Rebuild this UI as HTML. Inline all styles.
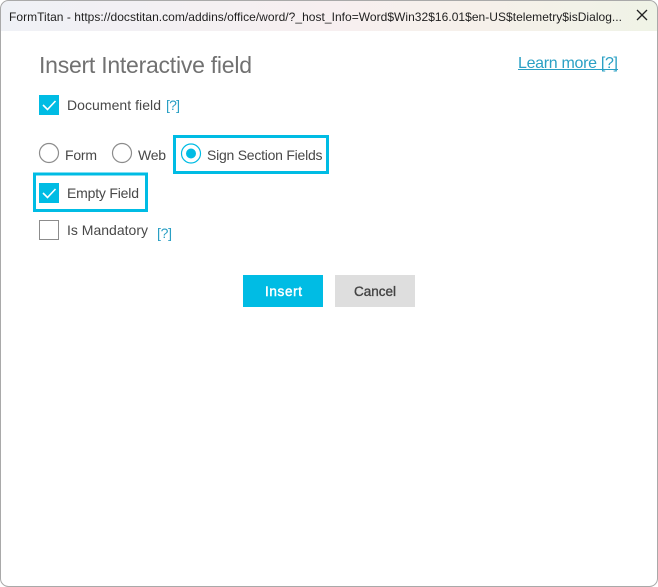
<!DOCTYPE html>
<html><head><meta charset="utf-8"><style>
html,body{margin:0;padding:0;width:658px;height:587px;overflow:hidden;background:#fff}
svg{display:block;position:absolute;left:0;top:0}
text{font-family:"Liberation Sans",sans-serif}
</style></head><body>
<svg width="658" height="587" viewBox="0 0 658 587" xmlns="http://www.w3.org/2000/svg">
<defs><linearGradient id="g" x1="0" x2="1" y1="0" y2="0">
<stop offset="0" stop-color="#eff1f6"/><stop offset=".5" stop-color="#f7eff0"/><stop offset=".72" stop-color="#f6f0ea"/><stop offset="1" stop-color="#eff3e6"/>
</linearGradient></defs>
<rect width="658" height="587" fill="#ffffff"/>
<path d="M1 31V9Q1 1 9 1H649Q657 1 657 9V31Z" fill="url(#g)"/>
<rect x=".5" y=".5" width="657" height="586" rx="8" fill="none" stroke="#a9a9a9"/>
<path d="M0 0H6Q0 0 0 6ZM658 0H652Q658 0 658 6ZM0 587H6Q0 587 0 581ZM658 587H652Q658 587 658 581Z" fill="#fff"/>
<text x="9" y="21" font-size="12" fill="#1f1f1f" textLength="613" lengthAdjust="spacing">FormTitan - https://docstitan.com/addins/office/word/?_host_Info=Word$Win32$16.01$en-US$telemetry$isDialog...</text>
<path d="M637 10L647 20M647 10L637 20" stroke="#222" stroke-width="1.300" fill="none"/>

<text x="39" y="73" font-size="23" fill="#717171" textLength="213" lengthAdjust="spacing">Insert Interactive field</text>
<text x="518" y="68" font-size="16" fill="#2aa0c4" textLength="100" lengthAdjust="spacing">Learn more [?]</text>
<rect x="518" y="69" width="100" height="1" fill="#2aa0c4"/>

<rect x="39" y="95" width="20" height="20" fill="#00bce4"/>
<path d="M43 105L47.500 109.500L55.500 101" stroke="#fff" stroke-width="1.600" fill="none"/>
<text x="67" y="110" font-size="14" fill="#484848" textLength="94" lengthAdjust="spacing">Document field</text>
<text x="166" y="110" font-size="14" fill="#2a9fc4" textLength="14" lengthAdjust="spacing">[?]</text>

<circle cx="49" cy="153" r="9.500" fill="#fff" stroke="#8c8c8c" stroke-width="1.200"/>
<text x="65" y="160" font-size="14" fill="#484848" textLength="32" lengthAdjust="spacing">Form</text>
<circle cx="122" cy="153" r="9.500" fill="#fff" stroke="#8c8c8c" stroke-width="1.200"/>
<text x="138" y="160" font-size="14" fill="#484848" textLength="28" lengthAdjust="spacing">Web</text>
<rect x="174.500" y="136.500" width="153" height="36" fill="none" stroke="#00bce4" stroke-width="3"/>
<circle cx="191" cy="153.500" r="9.500" fill="#fff" stroke="#00bce4" stroke-width="1.200"/>
<circle cx="191" cy="153.500" r="5" fill="#00bce4"/>
<text x="207" y="160" font-size="14" fill="#484848" textLength="115.500" lengthAdjust="spacing">Sign Section Fields</text>

<rect x="34.500" y="174" width="112" height="36.500" fill="none" stroke="#00bce4" stroke-width="3"/>
<rect x="39" y="183" width="20" height="20" fill="#00bce4"/>
<path d="M43 193L47.500 197.500L55.500 189" stroke="#fff" stroke-width="1.600" fill="none"/>
<text x="67" y="198" font-size="14" fill="#484848" textLength="72" lengthAdjust="spacing">Empty Field</text>

<rect x="39.500" y="220.500" width="19" height="19" fill="#fff" stroke="#8c8c8c" stroke-width="1"/>
<text x="67" y="235" font-size="14" fill="#484848" textLength="81" lengthAdjust="spacing">Is Mandatory</text>
<text x="157" y="238" font-size="14" fill="#2a9fc4" textLength="15" lengthAdjust="spacing">[?]</text>

<rect x="243" y="275" width="80" height="32" fill="#00bce4"/>
<text x="265" y="296" font-size="13.500" fill="#fff" stroke="#fff" stroke-width=".45" textLength="37" lengthAdjust="spacing">Insert</text>
<rect x="335" y="275" width="80" height="32" fill="#dedede"/>
<text x="354" y="296" font-size="13.500" fill="#444" stroke="#444" stroke-width=".35" textLength="42" lengthAdjust="spacing">Cancel</text>
</svg>
</body></html>
